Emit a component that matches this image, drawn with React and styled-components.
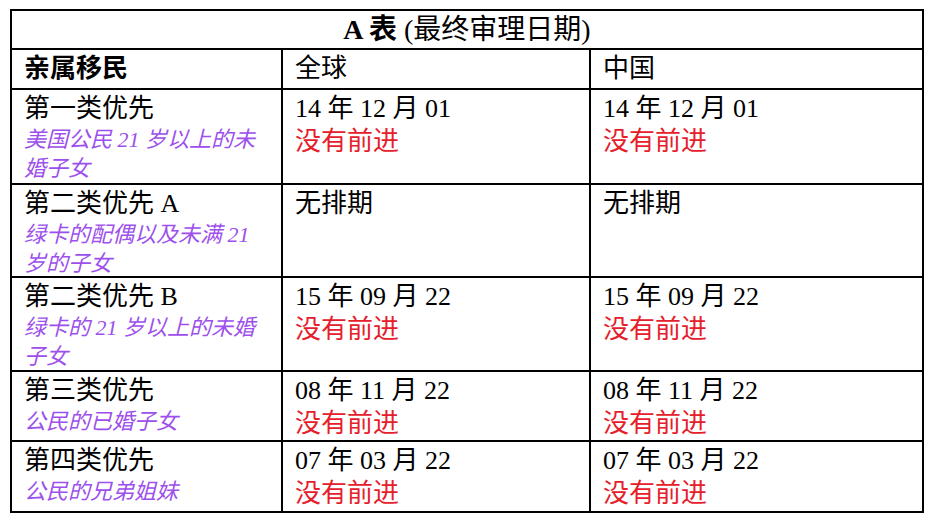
import React from "react";
import styled, { createGlobalStyle } from "styled-components";

const GlobalStyle = createGlobalStyle`
  html, body { margin: 0; padding: 0; background: #ffffff; }
  body { font-family: "Liberation Serif", "Noto Sans CJK SC", serif; color: #000; }
`;

const Page = styled.div`
  padding: 9px 0 0 10px;
`;

const Table = styled.div`
  display: grid;
  grid-template-columns: 269px 306px 331px;
  grid-template-rows: 37px 38px 93px 91px 92px 68px 69px;
  gap: 2px;
  padding: 2px;
  background: #000;
  width: max-content;
`;

const Cell = styled.div`
  background: #fff;
  padding: 2px 12px 0;
  font-size: 26px;
  line-height: 33px;
  overflow: hidden;
`;

const TitleCell = styled(Cell)`
  grid-column: 1 / -1;
  padding: 0;
  display: flex;
  align-items: center;
  justify-content: center;
  font-size: 28px;
  line-height: 37px;
`;

const HeadCell = styled(Cell)`
  padding: 0 12px;
  display: flex;
  align-items: center;
  line-height: 38px;
  font-weight: ${(p) => (p.$bold ? 700 : 400)};
`;

const Strong = styled.b`
  font-weight: 700;
`;

const Line = styled.div`
  white-space: nowrap;
`;

const Note = styled.div`
  font-size: 22px;
  line-height: 29px;
  font-style: italic;
  color: #9d50ec;
  white-space: nowrap;
`;

const Status = styled.div`
  color: #e6202b;
  white-space: nowrap;
`;

const rows = [
  {
    name: "第一类优先",
    note: ["美国公民 21 岁以上的未", "婚子女"],
    world: "14 年 12 月 01",
    china: "14 年 12 月 01",
    status: true,
  },
  {
    name: "第二类优先 A",
    note: ["绿卡的配偶以及未满 21", "岁的子女"],
    world: "无排期",
    china: "无排期",
    status: false,
  },
  {
    name: "第二类优先 B",
    note: ["绿卡的 21 岁以上的未婚", "子女"],
    world: "15 年 09 月 22",
    china: "15 年 09 月 22",
    status: true,
  },
  {
    name: "第三类优先",
    note: ["公民的已婚子女"],
    world: "08 年 11 月 22",
    china: "08 年 11 月 22",
    status: true,
  },
  {
    name: "第四类优先",
    note: ["公民的兄弟姐妹"],
    world: "07 年 03 月 22",
    china: "07 年 03 月 22",
    status: true,
  },
];

function DateCell({ date, status }) {
  return (
    <Cell>
      <Line>{date}</Line>
      {status && <Status>没有前进</Status>}
    </Cell>
  );
}

export default function App() {
  return (
    <>
      <GlobalStyle />
      <Page>
        <Table>
          <TitleCell>
            <span>
              <Strong>A 表</Strong> (最终审理日期)
            </span>
          </TitleCell>
          <HeadCell $bold>亲属移民</HeadCell>
          <HeadCell>全球</HeadCell>
          <HeadCell>中国</HeadCell>
          {rows.map((r) => (
            <React.Fragment key={r.name}>
              <Cell>
                <Line>{r.name}</Line>
                {r.note.map((n) => (
                  <Note key={n}>{n}</Note>
                ))}
              </Cell>
              <DateCell date={r.world} status={r.status} />
              <DateCell date={r.china} status={r.status} />
            </React.Fragment>
          ))}
        </Table>
      </Page>
    </>
  );
}
